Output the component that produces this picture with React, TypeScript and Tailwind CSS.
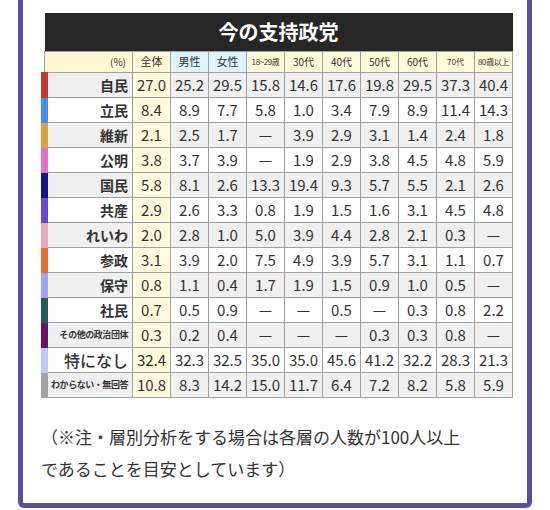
import React from 'react';

const heads = [
  { t: '全体', c: 'bg-[#fffad8] text-[11px]' },
  { t: '男性', c: 'bg-[#dcf4fb] text-[11px]' },
  { t: '女性', c: 'bg-[#dcf4fb] text-[11px]' },
  { t: '18~29歳', c: 'bg-[#fffad8] text-[8px] tracking-tighter' },
  { t: '30代', c: 'bg-[#fffad8] text-[10px]' },
  { t: '40代', c: 'bg-[#fffad8] text-[10px]' },
  { t: '50代', c: 'bg-[#fffad8] text-[10px]' },
  { t: '60代', c: 'bg-[#fffad8] text-[10px]' },
  { t: '70代', c: 'bg-[#fffad8] text-[8px]' },
  { t: '80歳以上', c: 'bg-[#fffad8] text-[8px] tracking-tighter' },
];

const rows = [
  { name: '自民', bar: 'border-l-[#c0392f]', size: 'text-[14px] font-bold', v: ['27.0', '25.2', '29.5', '15.8', '14.6', '17.6', '19.8', '29.5', '37.3', '40.4'] },
  { name: '立民', bar: 'border-l-[#3f8ff0]', size: 'text-[14px] font-bold', v: ['8.4', '8.9', '7.7', '5.8', '1.0', '3.4', '7.9', '8.9', '11.4', '14.3'] },
  { name: '維新', bar: 'border-l-[#dca13f]', size: 'text-[14px] font-bold', v: ['2.1', '2.5', '1.7', '—', '3.9', '2.9', '3.1', '1.4', '2.4', '1.8'] },
  { name: '公明', bar: 'border-l-[#e072c8]', size: 'text-[14px] font-bold', v: ['3.8', '3.7', '3.9', '—', '1.9', '2.9', '3.8', '4.5', '4.8', '5.9'] },
  { name: '国民', bar: 'border-l-[#15148c]', size: 'text-[14px] font-bold', v: ['5.8', '8.1', '2.6', '13.3', '19.4', '9.3', '5.7', '5.5', '2.1', '2.6'] },
  { name: '共産', bar: 'border-l-[#6b48d8]', size: 'text-[14px] font-bold', v: ['2.9', '2.6', '3.3', '0.8', '1.9', '1.5', '1.6', '3.1', '4.5', '4.8'] },
  { name: 'れいわ', bar: 'border-l-[#eaa9b7]', size: 'text-[14px] font-bold', v: ['2.0', '2.8', '1.0', '5.0', '3.9', '4.4', '2.8', '2.1', '0.3', '—'] },
  { name: '参政', bar: 'border-l-[#e4712f]', size: 'text-[14px] font-bold', v: ['3.1', '3.9', '2.0', '7.5', '4.9', '3.9', '5.7', '3.1', '1.1', '0.7'] },
  { name: '保守', bar: 'border-l-[#a79ff0]', size: 'text-[14px] font-bold', v: ['0.8', '1.1', '0.4', '1.7', '1.9', '1.5', '0.9', '1.0', '0.5', '—'] },
  { name: '社民', bar: 'border-l-[#245a5c]', size: 'text-[14px] font-bold', v: ['0.7', '0.5', '0.9', '—', '—', '0.5', '—', '0.3', '0.8', '2.2'] },
  { name: 'その他の政治団体', bar: 'border-l-[#6a1466]', size: 'text-[9px] font-bold tracking-tighter', v: ['0.3', '0.2', '0.4', '—', '—', '—', '0.3', '0.3', '0.8', '—'] },
  { name: '特になし', bar: 'border-l-[#b9cbf5]', size: 'text-[16px] font-medium', v: ['32.4', '32.3', '32.5', '35.0', '35.0', '45.6', '41.2', '32.2', '28.3', '21.3'] },
  { name: 'わからない・無回答', bar: 'border-l-[#a3a3a3]', size: 'text-[9px] font-bold tracking-tighter', v: ['10.8', '8.3', '14.2', '15.0', '11.7', '6.4', '7.2', '8.2', '5.8', '5.9'] },
];

export default function App() {
  return (
    <div className="w-[550px] h-[510px] bg-white font-['Noto_Sans_CJK_JP',sans-serif] text-[#333] overflow-hidden">
      <div className="mx-[18px] h-[508px] border-x-[5px] border-b-[5px] border-[#5b4e9e] rounded-b-[6px] px-[18px] pt-[13px]">
        <table className="w-[468px] table-fixed border-collapse">
          <colgroup>
            <col className="w-[88px]" />
            {heads.map((h) => (
              <col key={h.t} className="w-[38px]" />
            ))}
          </colgroup>
          <thead>
            <tr>
              <th colSpan={11} className="h-[38px] bg-[#262626] text-white text-[20px] font-bold text-center leading-none">
                今の支持政党
              </th>
            </tr>
            <tr className="h-[21px]">
              <th className="bg-[#fff8d2] border border-[#a0a0a0] text-right pr-[6px] text-[10px] font-normal leading-none">(%)</th>
              {heads.map((h) => (
                <th key={h.t} className={`${h.c} border border-[#a0a0a0] font-normal text-center leading-none whitespace-nowrap px-0`}>
                  {h.t}
                </th>
              ))}
            </tr>
          </thead>
          <tbody>
            {rows.map((r, i) => {
              const bg = i % 2 === 0 ? 'bg-[#f0f0f0]' : 'bg-white';
              return (
                <tr key={r.name} className="h-[25px]">
                  <td className={`${bg} ${r.bar} ${r.size} border border-[#a0a0a0] border-l-[7px] text-right pr-[4px] leading-none whitespace-nowrap`}>
                    {r.name}
                  </td>
                  {r.v.map((v, j) => (
                    <td
                      key={j}
                      className={`${j === 0 ? 'bg-[#fffbdc]' : bg} border border-[#a0a0a0] text-center text-[15px] leading-none px-0`}
                    >
                      {v}
                    </td>
                  ))}
                </tr>
              );
            })}
          </tbody>
        </table>
        <p className="mt-[23px] text-[17px] leading-[32px] text-[#333]">
          （※注・層別分析をする場合は各層の人数が100人以上
          <br />
          であることを目安としています）
        </p>
      </div>
    </div>
  );
}
